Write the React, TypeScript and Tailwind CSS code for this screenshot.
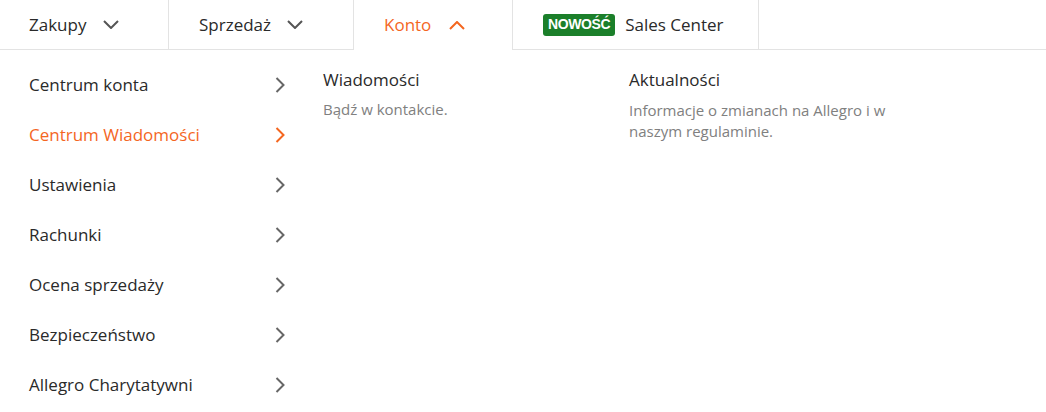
import React from "react";

const menuItems = [
  "Centrum konta",
  "Centrum Wiadomości",
  "Ustawienia",
  "Rachunki",
  "Ocena sprzedaży",
  "Bezpieczeństwo",
  "Allegro Charytatywni",
];

const ChevronDown = ({ className }: { className?: string }) => (
  <svg width="16" height="9" viewBox="0 0 16 9" fill="none" className={className}>
    <polyline points="1,1 8,8 15,1" stroke="currentColor" strokeWidth="2" />
  </svg>
);

const ChevronUp = ({ className }: { className?: string }) => (
  <svg width="16" height="9" viewBox="0 0 16 9" fill="none" className={className}>
    <polyline points="1,8 8,1 15,8" stroke="currentColor" strokeWidth="2" />
  </svg>
);

const ChevronRight = ({ className }: { className?: string }) => (
  <svg width="10" height="16" viewBox="0 0 10 16" fill="none" className={className}>
    <polyline points="1.5,1 8.5,8 1.5,15" stroke="currentColor" strokeWidth="2" />
  </svg>
);

const App = () => {
  return (
    <div className="w-[1046px] h-[412px] bg-white font-['Open_Sans',sans-serif] text-[#2a2a2a] overflow-hidden">
      <nav className="flex h-[50px]">
        <div className="w-[169px] flex items-center gap-[17px] pl-[29px] border-r border-b border-[#e3e3e3] text-[17px]">
          <span>Zakupy</span>
          <ChevronDown className="text-[#555]" />
        </div>
        <div className="w-[184px] flex items-center gap-[16px] pl-[30px] border-b border-[#e3e3e3] text-[17px]">
          <span>Sprzedaż</span>
          <ChevronDown className="text-[#555]" />
        </div>
        <div className="w-[160px] flex items-center gap-[18px] pl-[30px] border-x border-[#e3e3e3] text-[17px] text-[#f4661f]">
          <span>Konto</span>
          <ChevronUp />
        </div>
        <div className="w-[246px] flex items-center gap-[10px] pl-[30px] border-r border-b border-[#e3e3e3] text-[17px]">
          <span className="h-[22px] flex items-center px-[5px] rounded-[3px] bg-[#1b7f2a] text-white text-[14px] font-bold font-['Liberation_Sans',sans-serif] tracking-[-0.4px]">
            NOWOŚĆ
          </span>
          <span>Sales Center</span>
        </div>
        <div className="flex-1 border-b border-[#e3e3e3]" />
      </nav>

      <div className="flex">
        <ul className="w-[301px] pt-[10px] pr-[16px]">
          {menuItems.map((item, i) => {
            const active = i === 1;
            return (
              <li
                key={item}
                className={
                  "h-[50px] flex items-center justify-between pl-[29px] text-[17px] " +
                  (active ? "text-[#f4661f]" : "text-[#2a2a2a]")
                }
              >
                <span>{item}</span>
                <ChevronRight className={active ? "text-[#f4661f]" : "text-[#666]"} />
              </li>
            );
          })}
        </ul>

        <div className="flex pl-[22px] pt-[18px]">
          <div className="w-[306px]">
            <div className="text-[17px] leading-[24px] text-[#2a2a2a]">Wiadomości</div>
            <p className="mt-[7px] text-[15px] leading-[21px] text-[#808080]">Bądź w kontakcie.</p>
          </div>
          <div className="w-[280px]">
            <div className="text-[17px] leading-[24px] text-[#2a2a2a]">Aktualności</div>
            <p className="mt-[8px] text-[15px] leading-[21px] text-[#808080]">
              Informacje o zmianach na Allegro i w naszym regulaminie.
            </p>
          </div>
        </div>
      </div>
    </div>
  );
};

export default App;
